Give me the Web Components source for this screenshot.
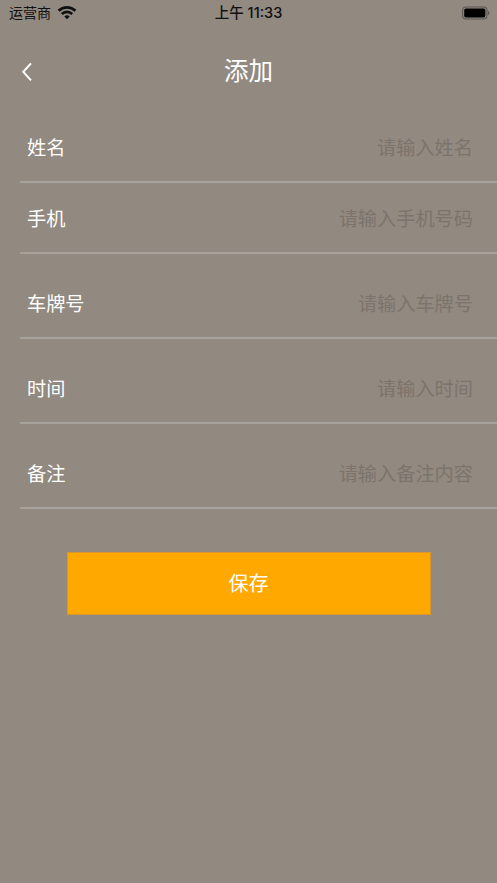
<!DOCTYPE html>
<html lang="zh"><head><meta charset="utf-8"><style>
html,body{margin:0;height:100%}
body{background:#928980;font-family:"Noto Sans CJK SC","Liberation Sans",sans-serif}
app-page{height:883px}
</style></head><body>
<app-page>
<status-bar></status-bar>
<nav-bar>添加</nav-bar>
<form-row label="姓名" placeholder="请输入姓名" h="71"></form-row>
<form-row label="手机" placeholder="请输入手机号码" h="71"></form-row>
<form-row label="车牌号" placeholder="请输入车牌号" h="85"></form-row>
<form-row label="时间" placeholder="请输入时间" h="85"></form-row>
<form-row label="备注" placeholder="请输入备注内容" h="85"></form-row>
<save-button>保存</save-button>
</app-page>
<script>
function def(name,html,setup){customElements.define(name,class extends HTMLElement{
  connectedCallback(){if(this.shadowRoot)return;const r=this.attachShadow({mode:'open'});r.innerHTML=html;if(setup)setup(this,r);}
});}
def('app-page','<style>:host{display:flex;flex-direction:column;background:#928980}</style><slot></slot>');
def('status-bar',`<style>
:host{display:flex;align-items:center;height:25px;position:relative;color:#111;font-size:14px;padding:0 0 0 9px;box-sizing:border-box}
.time{position:absolute;left:0;right:0;text-align:center;font-family:Inter,"Noto Sans CJK SC",sans-serif;font-size:14.5px;font-weight:500;line-height:25px}
.bat{margin-left:auto;margin-right:7px}
svg{display:block}
.w{margin-left:6px;margin-top:-1px}
span{line-height:25px}
</style>
<span>运营商</span>
<svg class="w" width="20" height="15" viewBox="0 0 20 15"><path d="M1.600 5.800a11.900 11.900 0 0 1 16.800 0" fill="none" stroke="#111" stroke-width="2.700"/><path d="M4.800 9a7.400 7.400 0 0 1 10.400 0" fill="none" stroke="#111" stroke-width="2.700"/><path d="M10 14.300 7.300 11.500a3.800 3.800 0 0 1 5.400 0z" fill="#111"/></svg>
<span class="time">上午 11:33</span>
<svg class="bat" width="28" height="14" viewBox="0 0 28 14"><rect x=".6" y="1" width="24.300" height="12" rx="3.200" fill="none" stroke="#5a5550" stroke-width="1.100"/><rect x="2.200" y="2.600" width="21.100" height="8.800" rx="1.700" fill="#000"/><path d="M26 5v4c.9-.3 1.400-1.100 1.400-2S26.900 5.300 26 5z" fill="#5a5550"/></svg>`);
def('nav-bar',`<style>
:host{display:flex;align-items:center;justify-content:center;height:87px;padding-top:1px;position:relative;color:#fff;font-size:24.500px;box-sizing:border-box}
svg{position:absolute;left:21px;top:37px}
</style>
<svg width="13" height="20" viewBox="0 0 13 20"><path d="M10 1.300 2.300 9.800l7.700 8.500" fill="none" stroke="#fff" stroke-width="2"/></svg><slot></slot>`);
def('form-row',`<style>
:host{display:block;margin-left:20px}
.r{display:flex;align-items:flex-end;justify-content:space-between;box-sizing:border-box;border-bottom:2px solid #a8a29d;padding:0 24px 20px 7px;font-size:19.200px;line-height:28px}
.l{color:#fff}.p{color:#7c746c}
</style><div class="r"><span class="l"></span><span class="p"></span></div>`,(el,r)=>{
  r.querySelector('.l').textContent=el.getAttribute('label');
  r.querySelector('.p').textContent=el.getAttribute('placeholder');
  r.querySelector('.r').style.height=el.getAttribute('h')+'px';
});
def('save-button',`<style>
:host{display:flex;align-items:center;justify-content:center;align-self:center;width:364px;height:63px;margin-top:43px;padding-bottom:2px;background:#ffa900;border:1px solid #d9962a;box-sizing:border-box;color:#fff;font-size:20px}
</style><slot></slot>`);
</script>
</body></html>
